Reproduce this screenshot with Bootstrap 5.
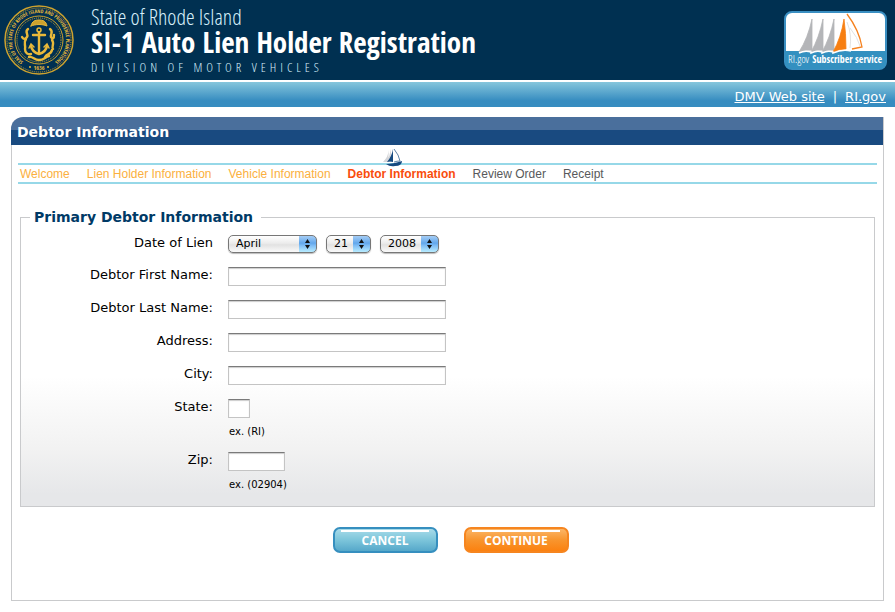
<!DOCTYPE html>
<html lang="en">
<head>
<meta charset="utf-8">
<meta name="viewport" content="width=device-width, initial-scale=1">
<title>SI-1 Auto Lien Holder Registration</title>
<link href="https://cdn.jsdelivr.net/npm/bootstrap@5.3.0/dist/css/bootstrap.min.css" rel="stylesheet">
<style>
  body { font-family: "DejaVu Sans", Verdana, sans-serif; font-size: 13px; line-height: 18px; color: #000; background: #fff; }
  .site-head { background: #003051; height: 80px; padding: 0 8px 0 3px; }
  .brand-text { font-family: "Open Sans Condensed Light", "Open Sans Condensed", "Liberation Sans Narrow", "Arial Narrow", sans-serif; padding: 2px 0 0 16px; color: #d6effa; }
  .brand-state { font-size: 22px; line-height: 26px; font-weight: 300; }
  .brand-title { font-family: "Open Sans Condensed", "Liberation Sans Narrow", "Arial Narrow", sans-serif; font-size: 29px; line-height: 26px; font-weight: 700; color: #fff; margin: 0; }
  .brand-div { font-size: 13px; line-height: 24px; font-weight: 300; letter-spacing: 4px; }
  .link-bar { margin-top: 2px; height: 25px; padding: 6px 9px 0; gap: 8px; color: #fff; background: linear-gradient(#86c6dc, #368cc0 75%); }
  .link-bar a { color: #fff; }
  .panel { margin: 10px 11px 11px; border: 1px solid #c9cacc; border-top: 0; border-top-left-radius: 12px; }
  .panel-title { margin: 0 0 0 -1px; height: 28px; padding: 1px 6px 0; font-size: 14px; line-height: 28px; font-weight: 700; color: #fff; border-top-left-radius: 12px; background: linear-gradient(#4a6f9c 13px, #194a80 13px); }
  .panel-body { padding: 18px 6px 47px; }
  .steps { font-family: "Liberation Sans", Arial, sans-serif; font-size: 12px; line-height: 15px; gap: 0 17px; padding: 2px 2px 0; margin: 0; border: solid #96d8e8; border-width: 2px 0; color: #58595b; }
  .steps a { color: #fbb040; text-decoration: none; }
  .steps .now { color: #f94d0c; font-weight: 700; }
  .boat { position: absolute; left: 34px; bottom: 15px; }
  .debtor { margin: 23px 2px 0; padding: 8px 0 15px; border: 1px solid #c9cacc; background: linear-gradient(#fff 55%, #f2f2f2 80%, #e6e7e9 96%); }
  .debtor legend { float: none; width: auto; margin: 0 0 0 9px; padding: 0 8px 0 4px; font-size: 14px; line-height: 20px; font-weight: 700; color: #003a66; }
  .field-list { gap: 14px; }
  .field-row { gap: 15px; }
  .field-row label { width: 192px; text-align: right; line-height: 16px; }
  .date-parts { gap: 9px; }
  .box { display: block; height: 19px; padding: 0 3px; border: 1px solid #c4c4c4; border-top-color: #7a7a7a; box-shadow: inset 0 1px 1px #ccc; background: #fff; font-size: 12px; outline-offset: 1px; }
  .w-long { width: 218px; }
  .w-state { width: 22px; }
  .w-zip { width: 57px; }
  .hint { font-size: 10px; line-height: 12px; margin: 8px 0 0 1px; }
  .pick { appearance: none; height: 18px; padding: 0 7px; border: 1px solid #777; border-radius: 5px; font-size: 11px; line-height: 16px; color: #000;
    background: url("data:image/svg+xml,%3Csvg xmlns='http://www.w3.org/2000/svg' width='17' height='16'%3E%3Cpath d='M8.500 3l2.500 4h-5zM8.500 13l2.500-4h-5z' fill='%23111'/%3E%3C/svg%3E") right center no-repeat,
      linear-gradient(#a5cdf5, #62a7ec 45%, #7fbdf5 60%, #b8ecff) right center / 17px 100% no-repeat,
      linear-gradient(#fff, #ececec 45%, #e2e2e2 55%, #fafafa); box-shadow: 0 1px 1px #bbb; }
  .w-month { width: 89px; }
  .w-day { width: 45px; }
  .w-year { width: 59px; }
  .act { width: 105px; height: 26px; padding: 1px 0 0; font-family: "Open Sans", sans-serif; font-size: 12px; line-height: 21px; font-weight: 700; color: #fff; border-radius: 7px; border: 2px solid; }
  .act:hover { color: #fff; }
  .act-cancel, .act-cancel:hover { border-color: #368fbf; background: linear-gradient(#fff, #fff) center 1px / 88px 2px no-repeat, linear-gradient(#a8dbe9, #7cc5da 50%, #56a8ca); }
  .act-go, .act-go:hover { border-color: #f6851f; background: linear-gradient(#fff, #fff) center 1px / 88px 2px no-repeat, linear-gradient(#fbb668, #f8952e 50%, #fb8110); }
  .actions { gap: 26px; margin-top: 20px; padding-left: 6px; }
</style>
<script src="https://cdn.jsdelivr.net/npm/bootstrap@5.3.0/dist/js/bootstrap.bundle.min.js"></script>
</head>
<body>
<header>
  <div class="site-head d-flex align-items-center">
    <svg class="flex-shrink-0" width="72" height="72" viewBox="0 0 72 72" role="img" aria-label="State seal">
      <defs>
        <path id="arcTop" d="M22 59A27 27 0 1 1 50 59"/>
      </defs>
      <g fill="none" stroke="#cda22e">
        <circle cx="36" cy="36" r="34" stroke-width="1.500"/>
        <circle cx="36" cy="36" r="32" stroke-width="1" stroke-dasharray="1 1"/>
        <circle cx="36" cy="36" r="24" stroke-width="1"/>
        <circle cx="36" cy="36" r="22" stroke-width="1" stroke-dasharray="1 1"/>
      </g>
      <g fill="#e8b93a" font-family="Open Sans Condensed, Liberation Sans Narrow, Arial Narrow, sans-serif" font-weight="700">
        <text font-size="5"><textPath href="#arcTop" startOffset="50%" text-anchor="middle">SEAL OF THE STATE OF RHODE ISLAND AND PROVIDENCE PLANTATIONS</textPath></text>
        <text x="36" y="66" font-size="6" text-anchor="middle">1636</text>
        <circle cx="27" cy="63" r="1"/><circle cx="45" cy="63" r="1"/>
      </g>
      <g fill="none" stroke="#e8b93a" stroke-linecap="round">
        <path d="M28 22c1-5 4-6 8-6s7 1 8 6c-5-2-11-2-16 0z" fill="#cda22e" stroke-width="1"/>
        <circle cx="36" cy="26" r="2" stroke-width="1.500"/>
        <path d="M36 28v21M30 31h12" stroke-width="2.400"/>
        <path d="M28 42c1 5 4 7 8 8c4-1 7-3 8-8" stroke-width="2.600"/>
        <path d="M26 44l2-4 3 3M41 43l3-3 2 4" stroke-width="1.500"/>
        <path d="M25 25c-4 3 1 5-1 8c-2 3-4 2-5 0M23 35c-3 4 0 6-1 10c0 4 3 6 6 5M47 25c4 3 0 5 1 8c2 3 3 1 3-2M49 36c3 4-1 7 1 9M49 46c-1 5-5 3-7 7" stroke-width="2.400"/>
        <path d="M26 53c4-1 5 3 10 3c5 0 6-3 10-4" stroke-width="2.400"/>
      </g>
    </svg>
    <div class="brand-text flex-grow-1">
      <div class="brand-state">State of Rhode Island</div>
      <h1 class="brand-title">SI-1 Auto Lien Holder Registration</h1>
      <div class="brand-div">DIVISION OF MOTOR VEHICLES</div>
    </div>
    <svg class="flex-shrink-0" width="103" height="60" viewBox="0 0 103 60" role="img" aria-label="RI.gov Subscriber service">
      <rect x="1" y="2" width="101" height="57" rx="7" fill="#fff" stroke="#3a8fc2" stroke-width="2"/>
      <path d="M1 41H102V52Q102 59 95 59H8Q1 59 1 52z" fill="#3390c0"/>
      <path d="M28 9v31q-7 0-13 2q9-14 13-33zM39 9v31q-7 0-12 2q8-14 12-33zM50 9v31q-7 0-12 2q8-14 12-33z" fill="#b4b5b8" stroke="#b4b5b8" stroke-width=".8"/>
      <path d="M60 9q2 14 2 30q-6 0-13 3q8-14 11-33z" fill="#f77f12" stroke="#f77f12" stroke-width=".8"/>
      <path d="M63 4q12 16 15 33l-10 2" fill="none" stroke="#f58220" stroke-width="1.300"/>
      <path d="M63 12q5 12 3 26M66 18q8 10 10 18" fill="none" stroke="#e2e2e2"/>
      <path d="M15 43q6-3 12-1v1q6-3 11-1v1q6-3 11-1v1q9-4 18-2" fill="none" stroke="#fff" stroke-width="1.500"/>
      <g fill="#fff" font-size="10">
        <text x="4" y="53" font-family="Open Sans Condensed Light, Open Sans Condensed, sans-serif" font-size="11" font-weight="300">RI.gov</text>
        <text x="98" y="53" font-family="Open Sans Condensed, Liberation Sans Narrow, sans-serif" font-weight="700" text-anchor="end">Subscriber service</text>
      </g>
    </svg>
  </div>
  <nav class="link-bar d-flex justify-content-end" aria-label="Site links">
    <a href="#">DMV Web site</a><span>|</span><a href="#">RI.gov</a>
  </nav>
</header>

<main class="panel">
  <h2 class="panel-title">Debtor Information</h2>
  <div class="panel-body">
    <ol class="steps list-unstyled d-flex flex-wrap">
      <li><a href="#">Welcome</a></li>
      <li><a href="#">Lien Holder Information</a></li>
      <li><a href="#">Vehicle Information</a></li>
      <li class="now position-relative" aria-current="step">
        <svg class="boat" width="20" height="19" viewBox="0 0 20 19" aria-hidden="true">
          <path d="M7 2Q6 9 1 14h5zM9 1Q8 8 4 14h5z" fill="#d5d6d9"/>
          <path d="M11 1v13q-3-1-6 0q5-6 6-13z" fill="#164a80"/>
          <path d="M12 1q5 6 6 12q-3 0-6 1" fill="none" stroke="#5f83a8" stroke-width="1"/>
          <path d="M4 16q7 0 16-3q0 5-7 5q-5 1-9-2z" fill="#164a80"/>
        </svg>
        Debtor Information</li>
      <li>Review Order</li>
      <li>Receipt</li>
    </ol>

    <form>
      <fieldset class="debtor">
        <legend>Primary Debtor Information</legend>
        <div class="field-list d-flex flex-column">
          <div class="field-row d-flex">
            <label for="month">Date of Lien</label>
            <div class="date-parts d-flex">
              <select class="pick w-month" id="month"><option>April</option></select>
              <select class="pick w-day" aria-label="Day"><option>21</option></select>
              <select class="pick w-year" aria-label="Year"><option>2008</option></select>
            </div>
          </div>
          <div class="field-row d-flex"><label for="first">Debtor First Name:</label><input class="box w-long" type="text" id="first"></div>
          <div class="field-row d-flex"><label for="last">Debtor Last Name:</label><input class="box w-long" type="text" id="last"></div>
          <div class="field-row d-flex"><label for="address">Address:</label><input class="box w-long" type="text" id="address"></div>
          <div class="field-row d-flex"><label for="city">City:</label><input class="box w-long" type="text" id="city"></div>
          <div class="field-row d-flex">
            <label for="state">State:</label>
            <div><input class="box w-state" type="text" id="state" maxlength="2" aria-describedby="stateHint"><div class="hint" id="stateHint">ex. (RI)</div></div>
          </div>
          <div class="field-row d-flex">
            <label for="zip">Zip:</label>
            <div><input class="box w-zip" type="text" id="zip" maxlength="5" aria-describedby="zipHint"><div class="hint" id="zipHint">ex. (02904)</div></div>
          </div>
        </div>
      </fieldset>
      <div class="actions d-flex justify-content-center">
        <button type="button" class="btn act act-cancel">CANCEL</button>
        <button type="submit" class="btn act act-go">CONTINUE</button>
      </div>
    </form>
  </div>
</main>
</body>
</html>
